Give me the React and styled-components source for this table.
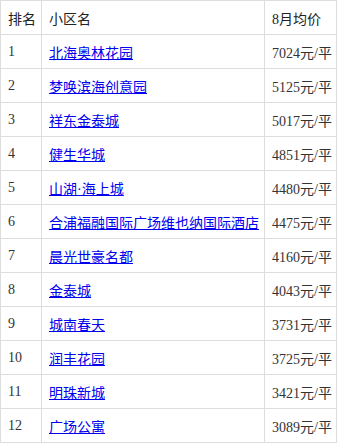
import React from 'react';
import styled, { createGlobalStyle } from 'styled-components';

const GlobalStyle = createGlobalStyle`
  body {
    margin: 0;
    background: #fff;
    font-family: "Liberation Serif", "Noto Sans CJK SC", serif;
  }
`

const Table = styled.table`
  width: 337px;
  border-collapse: collapse;
  table-layout: fixed;
  font-size: 14px;
  color: #333;
`
const Col = styled.col`
  width: ${p => p.w || 'auto'};
`
const Th = styled.th`
  height: 33px;
  padding: 0 7px;
  border: 1px solid #ddd;
  text-align: left;
  font-weight: normal;
  font-size: 14px;
  color: #222;
  white-space: nowrap;
`
const Td = styled.td`
  height: 33px;
  padding: 0 7px;
  border: 1px solid #ddd;
  white-space: nowrap;
`
const Link = styled.a`
  color: #00e;
  text-decoration: underline;
`

const rows = [
  ['北海奥林花园', 7024],
  ['梦唤滨海创意园', 5125],
  ['祥东金泰城', 5017],
  ['健生华城', 4851],
  ['山湖·海上城', 4480],
  ['合浦福融国际广场维也纳国际酒店', 4475],
  ['晨光世豪名都', 4160],
  ['金泰城', 4043],
  ['城南春天', 3731],
  ['润丰花园', 3725],
  ['明珠新城', 3421],
  ['广场公寓', 3089],
];

const App = () => (
  <>
    <GlobalStyle />
    <Table>
      <colgroup>
        <Col w="41px" />
        <Col />
        <Col w="72px" />
      </colgroup>
      <thead>
        <tr>
          <Th>排名</Th>
          <Th>小区名</Th>
          <Th>8月均价</Th>
        </tr>
      </thead>
      <tbody>
        {rows.map(([name, price], i) => (
          <tr key={name}>
            <Td>{i + 1}</Td>
            <Td><Link href="#">{name}</Link></Td>
            <Td>{price}元/平</Td>
          </tr>
        ))}
      </tbody>
    </Table>
  </>
);

export default App;
